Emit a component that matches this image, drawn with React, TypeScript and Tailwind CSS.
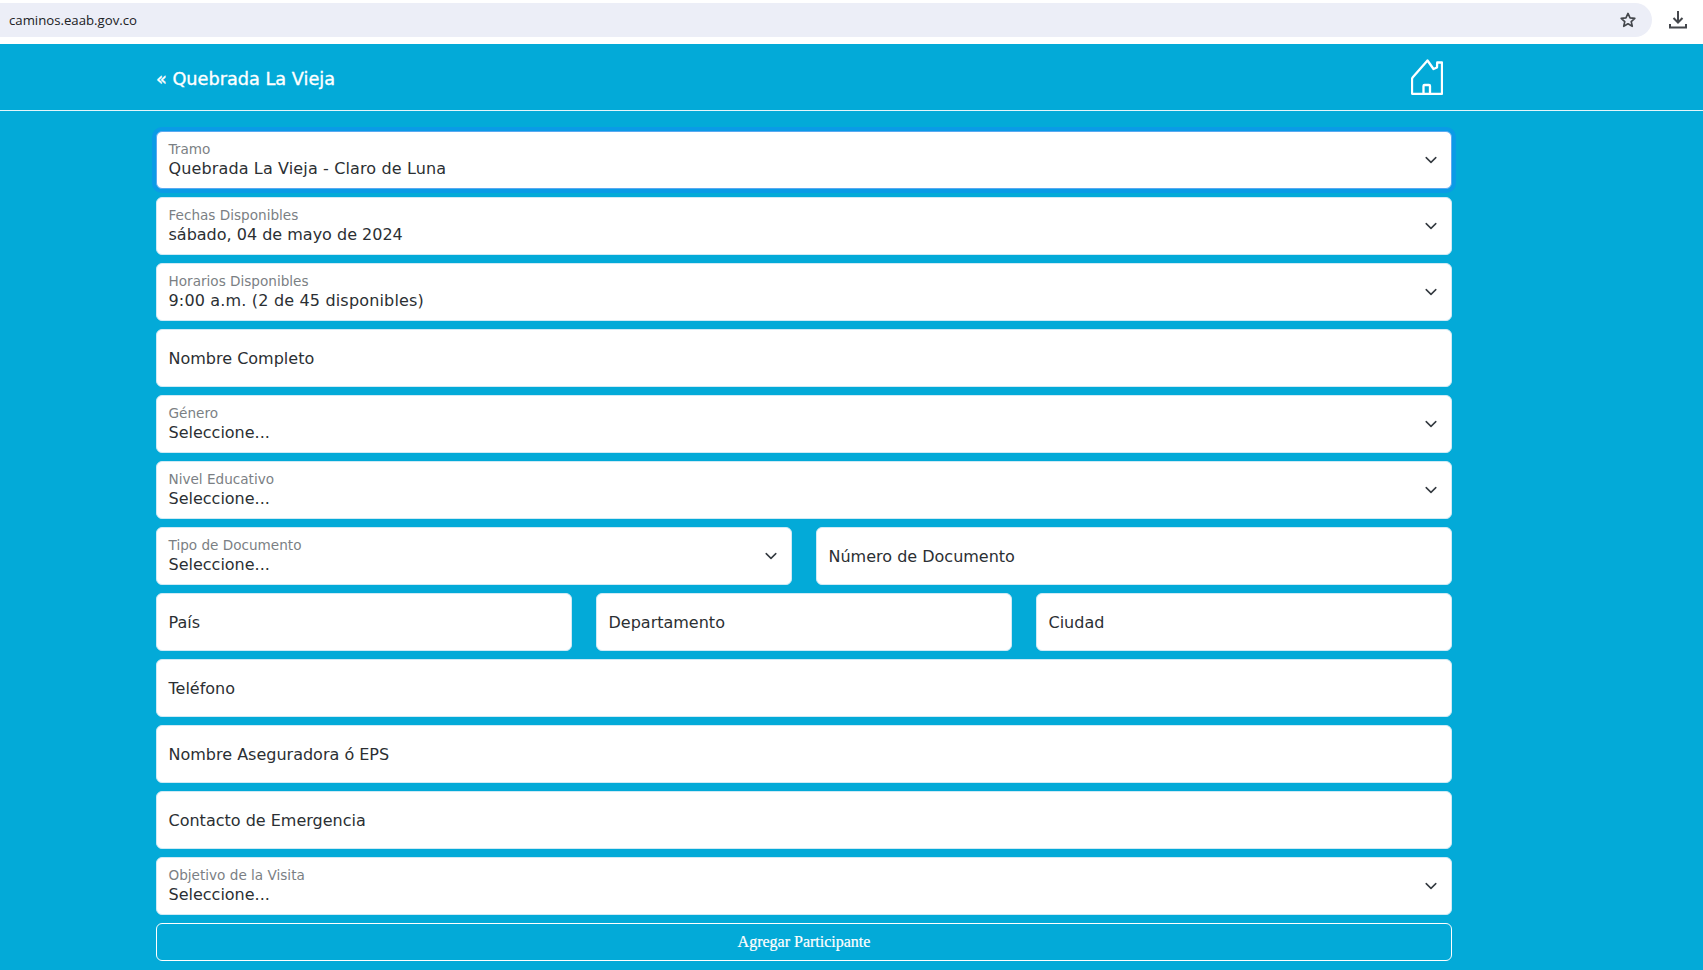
const FONT = "font-['DejaVu_Sans',sans-serif]";

function Chevron() {
  return (
    <svg width="16" height="16" viewBox="0 0 16 16" fill="none" stroke="#343a40" strokeWidth="1.5" strokeLinecap="round" strokeLinejoin="round" className="absolute right-3 top-1/2 -translate-y-1/2">
      <path d="M3.2 5.6L8 10.4l4.8-4.8" />
    </svg>
  );
}

function SelectBox({ label, value, focus, valueClass = "", className = "" }: { label: string; value: string; focus?: boolean; valueClass?: string; className?: string }) {
  return (
    <div className={`relative h-[58px] rounded-md bg-white border pl-[11.5px] pr-10 ${focus ? "border-[#5aa9f0] shadow-[0_0_0_4px_#0a9be6]" : "border-[#cfeaf5]"} ${className}`}>
      <div className="pt-[7px] text-[13.6px] leading-[20px] text-[#7b7f84] whitespace-nowrap">{label}</div>
      <div className={`text-[16px] leading-[20px] text-[#2b2f33] whitespace-nowrap ${valueClass}`}>{value}</div>
      <Chevron />
    </div>
  );
}

function InputBox({ label, className = "" }: { label: string; className?: string }) {
  return (
    <div className={`flex items-center h-[58px] rounded-md bg-white border border-[#cfeaf5] px-[11.5px] pt-[2px] text-[16px] text-[#2b2f33] whitespace-nowrap ${className}`}>
      {label}
    </div>
  );
}

export default function App() {
  return (
    <div className={`h-[970px] w-[1703px] overflow-hidden bg-white ${FONT}`}>
      <div className="flex h-[44px] items-start bg-white pt-[3px]">
        <div className="flex h-[34px] w-[1652px] items-center justify-between rounded-r-[17px] bg-[#eceef7] pl-[9px] pr-[15px]">
          <span className="font-['Open_Sans',sans-serif] pt-[2px] text-[13.2px] text-[#202124]">caminos.eaab.gov.co</span>
          <svg width="18" height="18" viewBox="0 0 24 24" fill="none" stroke="#44474c" strokeWidth="2.2" strokeLinejoin="round">
            <path d="M12 3.2l2.7 5.9 6.4.7-4.8 4.3 1.4 6.3-5.7-3.3-5.7 3.3 1.4-6.3-4.8-4.3 6.4-.7z" />
          </svg>
        </div>
        <svg width="20" height="20" viewBox="0 0 20 20" fill="none" stroke="#44474c" strokeWidth="2" className="ml-[16px] mt-[7px]">
          <path d="M10 1v11M5.5 8l4.5 4.5L14.5 8" />
          <path d="M2 14v3.5h16V14" />
        </svg>
      </div>

      <div className="h-[926px] bg-[#03aad8]">
        <header className="h-[67px] border-b border-[#e4f6fb]">
          <div className="flex h-[66px] w-[1296px] ml-[156px] items-center justify-between">
            <span className="pt-[5px] text-[17.7px] text-white [-webkit-text-stroke:0.35px_white]">« Quebrada La Vieja</span>
            <svg width="32" height="36" viewBox="0 0 32 36" fill="none" stroke="white" strokeWidth="2.3" strokeLinejoin="round" strokeLinecap="round" className="mr-[9px] mb-[1px]">
              <path d="M2 34.9h28.5c.3 0 .5-.2.5-.5V3.5h-4.8L26 8.5 22.5 10 16.5 1.5 2 18c-.6.7-1 1.6-1 2.5v13.4c0 .6.4 1 1 1z" />
              <path d="M12.5 35v-8c0-.6.4-1 1-1h4.5c.6 0 1 .4 1 1v8" />
            </svg>
          </div>
        </header>

        <main className="ml-[156px] flex w-[1296px] flex-col gap-2 pt-[20px]">
          <SelectBox focus label="Tramo" value="Quebrada La Vieja - Claro de Luna" valueClass="tracking-[0.13px]" />
          <SelectBox label="Fechas Disponibles" value="sábado, 04 de mayo de 2024" />
          <SelectBox label="Horarios Disponibles" value="9:00 a.m. (2 de 45 disponibles)" valueClass="tracking-[0.17px]" />
          <InputBox label="Nombre Completo" />
          <SelectBox label="Género" value="Seleccione..." />
          <SelectBox label="Nivel Educativo" value="Seleccione..." />
          <div className="grid grid-cols-2 gap-6">
            <SelectBox label="Tipo de Documento" value="Seleccione..." />
            <InputBox label="Número de Documento" />
          </div>
          <div className="grid grid-cols-3 gap-6">
            <InputBox label="País" />
            <InputBox label="Departamento" />
            <InputBox label="Ciudad" />
          </div>
          <InputBox label="Teléfono" />
          <InputBox label="Nombre Aseguradora ó EPS" />
          <InputBox label="Contacto de Emergencia" />
          <SelectBox label="Objetivo de la Visita" value="Seleccione..." />
          <button className="h-[38px] rounded-md border border-white font-['Liberation_Serif',serif] text-[16px] text-white [-webkit-text-stroke:0.2px_white]">
            Agregar Participante
          </button>
        </main>
      </div>
    </div>
  );
}
